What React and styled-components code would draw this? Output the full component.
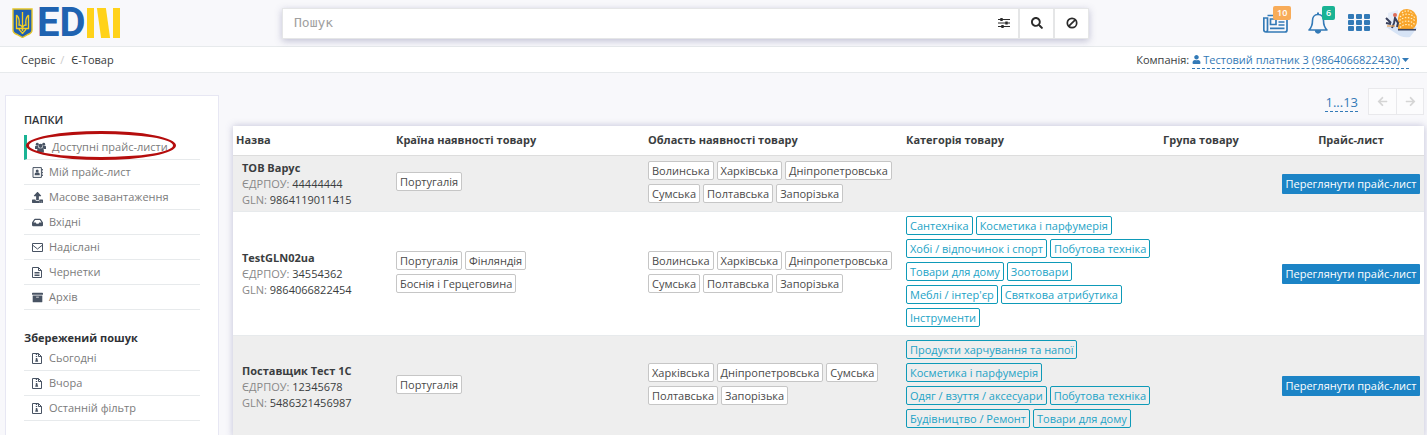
import React from 'react';
import styled, { createGlobalStyle, css } from 'styled-components';
import { FaUpload, FaInbox, FaArchive, FaSearch, FaUser, FaArrowLeft, FaArrowRight } from 'react-icons/fa';

const Global = createGlobalStyle`
  *, *::before, *::after { box-sizing: border-box; }
  html { scrollbar-width: none; }
  body {
    margin: 0;
    background: #f8f8fb;
    color: #3a3d40;
    font-family: "Open Sans", "Noto Sans", sans-serif;
    font-size: 11px;
    line-height: 16px;
  }
  button, input { font: inherit; color: inherit; }
  button { cursor: pointer; }
  a { text-decoration: none; }
`;

const Shell = styled.div`
  min-height: 100vh;
  display: flex;
  flex-direction: column;
`;

const TopBar = styled.header`
  display: flex;
  align-items: center;
  height: 47px;
  border-bottom: 1px solid #e7eaec;
`;

const LogoLink = styled.a`
  flex: 0 0 282px;
  display: flex;
  align-items: center;
  padding-left: 12px;
  gap: 4px;
`;

const LogoText = styled.span`
  color: #1f63b1;
  font-family: Roboto, sans-serif;
  font-weight: 700;
  font-size: 40px;
  line-height: 30px;
`;

const LogoMark = styled.span`
  display: flex;
  height: 30px;
  gap: 5px;
  margin-left: -3px;
`;

const LogoBar = styled.span`
  width: 7px;
  background: #ffd21a;
`;

const LogoSlant = styled.span`
  width: 9px;
  background: #ffd21a;
  transform: skewX(8deg);
`;

const SearchForm = styled.form`
  flex: 1;
  display: flex;
  height: 31px;
  background: #fff;
  border: 1px solid #e5e6e7;
  box-shadow: 0 2px 7px rgba(90, 90, 140, 0.35);
`;

const SearchInput = styled.input`
  flex: 1;
  min-width: 0;
  border: 0;
  outline: 0;
  padding: 0 11px;
  background: transparent;
  font-family: "DejaVu Sans Mono", monospace;
  font-size: 13px;
  &::placeholder { color: #a0a0a0; opacity: 1; }
`;

const SearchButton = styled.button`
  display: flex;
  align-items: center;
  justify-content: center;
  width: ${(p) => (p.$plain ? 28 : 35)}px;
  padding: 0;
  border: 0;
  border-left: ${(p) => (p.$plain ? 0 : 2)}px solid #e5e6e7;
  background: transparent;
  color: #2b2b2b;
  font-size: 12px;
`;

const Tools = styled.nav`
  flex: 0 0 338px;
  display: flex;
  align-items: center;
  justify-content: flex-end;
  gap: 15px;
  padding-right: 9px;
`;

const ToolGroup = styled.div`
  display: flex;
  align-items: center;
  gap: 20px;
`;

const ToolButton = styled.button`
  position: relative;
  display: flex;
  padding: 0;
  border: 0;
  background: transparent;
  color: #337ab7;
`;

const Badge = styled.span`
  position: absolute;
  top: -6px;
  left: ${(p) => p.$left}px;
  padding: 0 4px;
  border-radius: 2px;
  background: ${(p) => p.$color};
  color: #fff;
  font-size: 9px;
  font-weight: 600;
  line-height: 14px;
`;

const CrumbBar = styled.div`
  display: flex;
  align-items: center;
  justify-content: space-between;
  height: 26px;
  padding: 0 18px 0 21px;
  background: #fff;
  border-bottom: 1px solid #e7eaec;
`;

const Crumbs = styled.nav`
  display: flex;
  gap: 5px;
  a { color: inherit; }
  span { color: #ccc; margin-right: 2px; }
`;

const Company = styled.div`
  display: flex;
  align-items: flex-start;
  gap: 3px;
`;

const DashedLink = styled.a`
  display: inline-flex;
  align-items: center;
  gap: 2px;
  margin-bottom: -1px;
  color: #337ab7;
  border-bottom: 1px dashed #337ab7;
  font-size: ${(p) => (p.$large ? 13 : 11)}px;
  line-height: ${(p) => (p.$large ? 18 : 16)}px;
`;

const Body = styled.div`
  flex: 1;
  display: flex;
  align-items: stretch;
  gap: 14px;
  padding: 0 3px 0 5px;
`;

const Sidebar = styled.aside`
  flex: 0 0 214px;
  margin-top: 22px;
  padding: 16px 18px 0;
  background: #fff;
  border: 1px solid #e7e7f3;
  border-bottom: 0;
`;

const FolderTitle = styled.h2`
  margin: 0;
  font-size: 11px;
  line-height: 16px;
  font-weight: ${(p) => (p.$bold ? 700 : 600)};
  color: #2f3236;
`;

const FolderList = styled.ul`
  list-style: none;
  margin: ${(p) => (p.$tight ? '0' : '7px 0 20px')};
  padding: 0;
`;

const FolderItem = styled.li`
  position: relative;
  height: 25px;
  border-bottom: 1px solid #e7eaec;
  ${(p) => p.$active && css`border-left: 3px solid #1ab394;`}
`;

const FolderLink = styled.a`
  display: flex;
  align-items: center;
  gap: 6px;
  height: 24px;
  padding-left: 8px;
  color: #7b7b7b;
  svg { color: #485363; width: 11px; height: 11px; }
`;

const Highlight = styled.span`
  position: absolute;
  left: -1px;
  top: -4px;
  width: 150px;
  height: 29px;
  border: 3px solid #b50d0d;
  border-radius: 50%;
  pointer-events: none;
`;

const Main = styled.main`
  flex: 1;
  min-width: 0;
`;

const PagerBar = styled.div`
  display: flex;
  align-items: center;
  justify-content: flex-end;
  gap: 10px;
  height: 53px;
  padding-top: 4px;
`;

const Pager = styled.div`
  display: flex;
  border: 1px solid #e9e9ec;
`;

const PagerButton = styled.button`
  display: flex;
  align-items: center;
  justify-content: center;
  width: 27px;
  height: 25px;
  padding: 0;
  border: 0;
  background: #fcfcfd;
  color: #d5d5d5;
  & + & { border-left: 1px solid #e9e9ec; }
`;

const Table = styled.table`
  width: 100%;
  table-layout: fixed;
  border-collapse: separate;
  border-spacing: 0;
  background: #fff;
  box-shadow: 0 0 7px rgba(90, 90, 150, 0.35);
`;

const Th = styled.th`
  height: 30px;
  padding: 0 3px 2px;
  border-bottom: 1px solid #ddd;
  text-align: ${(p) => (p.$center ? 'center' : 'left')};
  font-weight: 700;
`;

const Row = styled.tr`
  background: ${(p) => (p.$shaded ? '#eee' : '#fff')};
`;

const Td = styled.td`
  padding: 4px 3px;
  border-bottom: 1px solid #e7eaec;
  vertical-align: middle;
`;

const NameTd = styled(Td)`
  padding: 4px 3px 3px 9px;
`;

const Line = styled.div`
  span { color: #888; }
`;

const Chips = styled.div`
  display: flex;
  flex-wrap: wrap;
  gap: 4px 3px;
  padding-bottom: 4px;
`;

const Chip = styled.span`
  padding: 0 3px;
  border: 1px solid ${(p) => (p.$accent ? '#0e9ab8' : '#c6c6c6')};
  border-radius: 2px;
  background: ${(p) => (p.$accent ? 'transparent' : '#fff')};
  color: ${(p) => (p.$accent ? '#23a3c6' : '#4a4a4a')};
  line-height: 17px;
`;

const PriceButton = styled.button`
  display: block;
  margin: 0 auto;
  padding: 0 4px;
  border: 0;
  border-radius: 1px;
  background: #1c84c6;
  color: #fff;
  line-height: 20px;
  white-space: nowrap;
`;

const Shield = () => (
  <svg width="21" height="30" viewBox="0 0 21 30" aria-hidden="true">
    <path d="M1 1h19v21q0 3-4 4.500l-5.500 3-5.500-3Q1 25 1 22z" fill="#1f5fae" stroke="#e5c528" strokeWidth="1.400" />
    <path d="M10.500 4v19M4.500 7v13.500h12V7M4.500 7c3 3 3 7 2.500 10 2 0 3.500 2 3.500 4 0-2 1.500-4 3.500-4-.5-3-.5-7 2.500-10M7 20.500c0 3 3.500 3 3.500 5.500 0-2.500 3.500-2.500 3.500-5.500" fill="none" stroke="#f5cf22" strokeWidth="1.300" />
  </svg>
);

const Sliders = () => (
  <svg width="12" height="12" viewBox="0 0 12 12" fill="none" stroke="#2b2b2b" aria-hidden="true">
    <path d="M0 2.500h12M0 6h12M0 9.500h12" strokeWidth="1.200" />
    <path d="M3.500 1v3M8.500 4.500v3M4.500 8v3" strokeWidth="2.400" />
  </svg>
);

const Ban = () => (
  <svg width="12" height="12" viewBox="0 0 12 12" fill="none" stroke="#2b2b2b" strokeWidth="1.700" aria-hidden="true">
    <circle cx="6" cy="6" r="4.700" />
    <path d="M2.800 9.200l6.400-6.400" />
  </svg>
);

const News = () => (
  <svg width="25" height="22" viewBox="0 0 25 22" fill="none" stroke="currentColor" strokeWidth="1.700" aria-hidden="true">
    <path d="M4.500 3.500h19.500v14.500q0 2-2 2H3q-2.200 0-2.200-2.200V6h3.700v12q0 1.800-1.500 1.800" />
    <path d="M7.500 7h5.500v5.500h-5.500zM15.500 7h6M15.500 10h6M15.500 13h6M7 16.300h14.500" />
  </svg>
);

const Bell = () => (
  <svg width="20" height="22" viewBox="0 0 20 22" fill="none" stroke="currentColor" aria-hidden="true">
    <path d="M10 2.500c-4 0-5.500 3-5.500 6 0 5-1.500 7.500-3.500 9.500h18c-2-2-3.500-4.500-3.500-9.500 0-3-1.500-6-5.500-6z" strokeWidth="1.600" strokeLinejoin="round" />
    <path d="M10 .5v2" strokeWidth="2" />
    <path d="M7.300 18.500a2.700 2.700 0 0 0 5.400 0z" fill="currentColor" />
  </svg>
);

const Grid = () => (
  <svg width="22" height="18" viewBox="0 0 22 18" fill="currentColor" aria-hidden="true">
    {[0, 6, 12].map((y) => [0, 8, 16].map((x) => (
      <rect key={`${x}-${y}`} x={x} y={y} width="6" height="5" rx="1" />
    )))}
  </svg>
);

const Avatar = () => (
  <svg width="33" height="30" viewBox="0 0 33 30" aria-hidden="true">
    <path d="M1 19l22-4 9 5-7 9q-5 1-10-1z" fill="#d6e3f5" />
    <path d="M3 5l10-3v16H3z" fill="#e6edf8" />
    <path d="M13 21V10Q14 1 22 1q10 1 10 11 0 6-4 9z" fill="#f9a52b" />
    <g fill="none" stroke="#fff0c8" strokeWidth="1.100" strokeDasharray="1.500 1.500">
      <path d="M17 5c3-3 8-3 11 1M15 9c4-4 11-4 15 1M14.500 12.500c4-4 12-4 16 1M14.500 16c4-4 12-4 15.500 1M15 19.500c4-4 10-4 13.500 0" />
    </g>
    <path d="M13 21.700h18" stroke="#39415c" strokeWidth="1.600" />
    <path d="M1 10l5 5M1 15l5 1M7 20l2-5 1-5 3 5-1 4" fill="none" stroke="#39415c" strokeWidth="2" />
    <path d="M2 18h8" stroke="#e2a15b" strokeWidth="1.300" />
    <circle cx="10" cy="7" r="2" fill="#dd6b58" />
  </svg>
);

const Caret = () => (
  <svg width="7" height="4" viewBox="0 0 7 4" fill="currentColor" aria-hidden="true"><path d="M0 0h7L3.500 4z" /></svg>
);

const Users = () => (
  <svg viewBox="0 0 12 11" fill="currentColor" aria-hidden="true">
    <circle cx="2.500" cy="2" r="1.600" /><circle cx="9.500" cy="2" r="1.600" /><circle cx="6" cy="3.700" r="2.300" />
    <path d="M0 7V5q0-1.300 1-1.300h2.300Q3.200 5.600 4.300 6L3 7zM12 7V5q0-1.300-1-1.300H8.700Q8.800 5.600 7.700 6L9 7zM2.300 11V8.500Q2.300 6.300 4 6.300h4q1.700 0 1.700 2.200V11z" />
  </svg>
);

const Book = () => (
  <svg viewBox="0 0 11 11" fill="none" stroke="currentColor" aria-hidden="true">
    <path d="M1 .6h8.400v9.800H1zM10.400 2v1.500M10.400 4.800v1.500M10.400 7.500V9" />
    <circle cx="5.200" cy="3.900" r="1.500" fill="currentColor" stroke="none" />
    <path d="M2.700 8.300V7q0-1.500 1.300-1.500h2.400q1.300 0 1.300 1.500v1.300z" fill="currentColor" stroke="none" />
  </svg>
);

const Envelope = () => (
  <svg viewBox="0 0 11 11" fill="none" stroke="currentColor" strokeLinejoin="round" aria-hidden="true">
    <path d="M.5 1.500h10v8H.5zM.5 3l5 4 5-4" />
  </svg>
);

const FileText = () => (
  <svg viewBox="0 0 11 11" fill="none" stroke="currentColor" aria-hidden="true">
    <path d="M.5.5h6l3 3v7h-9zM6.500.5v3h3M2.500 5.500h5M2.500 7h5M2.500 8.500h5" />
  </svg>
);

const FileZip = () => (
  <svg viewBox="0 0 11 11" fill="none" stroke="currentColor" aria-hidden="true">
    <path d="M.5.5h6l3 3v7h-9zM6.500.5v3h3" />
    <path d="M4.500 1v5" strokeWidth="1.300" strokeDasharray="1 1" />
    <path d="M4 5.500h1.300l.9 3.200H3.200z" fill="currentColor" stroke="none" />
  </svg>
);

const folders = [
  { label: 'Доступні прайс-листи', Icon: Users, active: true },
  { label: 'Мій прайс-лист', Icon: Book },
  { label: 'Масове завантаження', Icon: FaUpload },
  { label: 'Вхідні', Icon: FaInbox },
  { label: 'Надіслані', Icon: Envelope },
  { label: 'Чернетки', Icon: FileText },
  { label: 'Архів', Icon: FaArchive },
];

const saved = ['Сьогодні', 'Вчора', 'Останній фільтр'].map((label) => ({ label, Icon: FileZip }));

const regions = ['Волинська', 'Харківська', 'Дніпропетровська', 'Сумська', 'Полтавська', 'Запорізька'];

const suppliers = [
  { name: 'ТОВ Варус', code: '44444444', gln: '9864119011415', countries: ['Португалія'], regions, categories: [] },
  {
    name: 'TestGLN02ua', code: '34554362', gln: '9864066822454',
    countries: ['Португалія', 'Фінляндія', 'Боснія і Герцеговина'],
    regions,
    categories: ['Сантехніка', 'Косметика і парфумерія', 'Хобі / відпочинок і спорт', 'Побутова техніка', 'Товари для дому', 'Зоотовари', "Меблі / інтер'єр", 'Святкова атрибутика', 'Інструменти'],
  },
  {
    name: 'Поставщик Тест 1С', code: '12345678', gln: '5486321456987',
    countries: ['Португалія'],
    regions: ['Харківська', 'Дніпропетровська', 'Сумська', 'Полтавська', 'Запорізька'],
    categories: ['Продукти харчування та напої', 'Косметика і парфумерія', 'Одяг / взуття / аксесуари', 'Побутова техніка', 'Будівництво / Ремонт', 'Товари для дому'],
  },
];

const Folders = ({ items, tight }) => (
  <FolderList $tight={tight}>
    {items.map(({ label, Icon, active }) => (
      <FolderItem key={label} $active={active}>
        <FolderLink href="#"><Icon />{label}</FolderLink>
        {active && <Highlight />}
      </FolderItem>
    ))}
  </FolderList>
);

const ChipList = ({ items, accent }) => (
  items.length ? <Chips>{items.map((t) => <Chip key={t} $accent={accent}>{t}</Chip>)}</Chips> : null
);

export default function App() {
  return (
    <Shell>
      <Global />
      <TopBar>
        <LogoLink href="#" aria-label="EDIN">
          <Shield />
          <LogoText>ED</LogoText>
          <LogoMark><LogoBar /><LogoSlant /><LogoBar /></LogoMark>
        </LogoLink>
        <SearchForm onSubmit={(e) => e.preventDefault()}>
          <SearchInput aria-label="Пошук" placeholder="Пошук" />
          <SearchButton type="button" $plain aria-label="Фільтри"><Sliders /></SearchButton>
          <SearchButton type="submit" aria-label="Шукати"><FaSearch /></SearchButton>
          <SearchButton type="reset" aria-label="Очистити"><Ban /></SearchButton>
        </SearchForm>
        <Tools>
          <ToolGroup>
            <ToolButton aria-label="Новини"><News /><Badge $left={10} $color="#f8ac59">10</Badge></ToolButton>
            <ToolButton aria-label="Сповіщення"><Bell /><Badge $left={14} $color="#1ab394">6</Badge></ToolButton>
            <ToolButton aria-label="Сервіси"><Grid /></ToolButton>
          </ToolGroup>
          <ToolButton aria-label="Профіль"><Avatar /></ToolButton>
        </Tools>
      </TopBar>
      <CrumbBar>
        <Crumbs><a href="#">Сервіс</a><span>/</span><a href="#">Є-Товар</a></Crumbs>
        <Company>
          Компанія: <DashedLink href="#"><FaUser size={9} />Тестовий платник 3 (9864066822430)<Caret /></DashedLink>
        </Company>
      </CrumbBar>
      <Body>
        <Sidebar>
          <FolderTitle>ПАПКИ</FolderTitle>
          <Folders items={folders} />
          <FolderTitle $bold>Збережений пошук</FolderTitle>
          <Folders items={saved} tight />
        </Sidebar>
        <Main>
          <PagerBar>
            <DashedLink href="#" $large>1...13</DashedLink>
            <Pager>
              <PagerButton aria-label="Попередня"><FaArrowLeft /></PagerButton>
              <PagerButton aria-label="Наступна"><FaArrowRight /></PagerButton>
            </Pager>
          </PagerBar>
          <Table>
            <colgroup>
              {[160, 252, 258, 257, 118, 146].map((w, i) => <col key={i} width={w} />)}
            </colgroup>
            <thead>
              <tr>
                <Th>Назва</Th><Th>Країна наявності товару</Th><Th>Область наявності товару</Th>
                <Th>Категорія товару</Th><Th>Група товару</Th><Th $center>Прайс-лист</Th>
              </tr>
            </thead>
            <tbody>
              {suppliers.map((s, i) => (
                <Row key={s.name} $shaded={i % 2 === 0}>
                  <NameTd>
                    <Line><b>{s.name}</b></Line>
                    <Line><span>ЄДРПОУ:</span> {s.code}</Line>
                    <Line><span>GLN:</span> {s.gln}</Line>
                  </NameTd>
                  <Td><ChipList items={s.countries} /></Td>
                  <Td><ChipList items={s.regions} /></Td>
                  <Td><ChipList items={s.categories} accent /></Td>
                  <Td />
                  <Td><PriceButton>Переглянути прайс-лист</PriceButton></Td>
                </Row>
              ))}
            </tbody>
          </Table>
        </Main>
      </Body>
    </Shell>
  );
}
